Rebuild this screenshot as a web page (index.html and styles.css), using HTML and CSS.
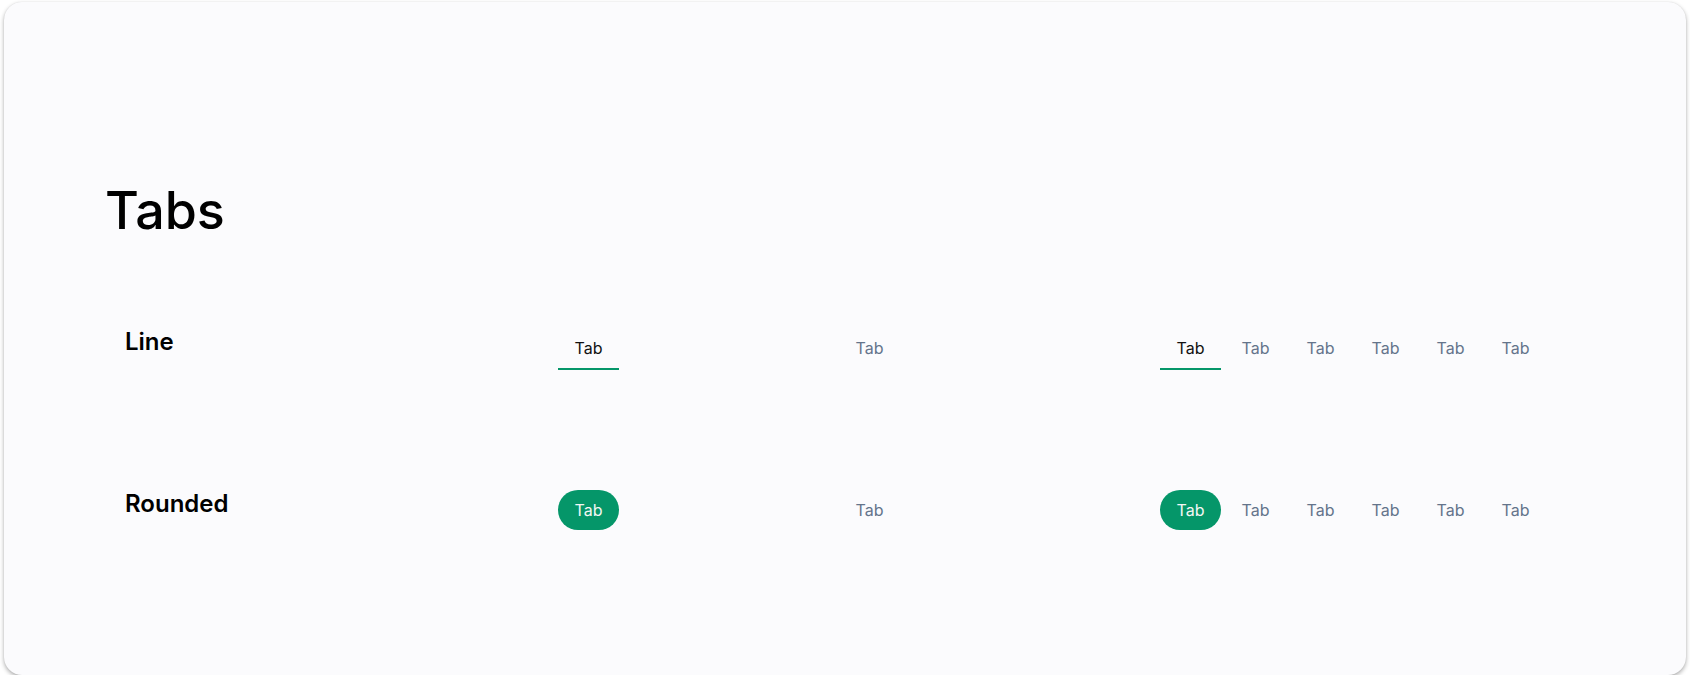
FILE: index.html
```html
<!DOCTYPE html>
<html lang="en">
<head>
<meta charset="utf-8">
<title>Tabs</title>
<link rel="stylesheet" href="styles.css">
</head>
<body>
<main class="card">
  <h1 class="title">Tabs</h1>
  <section class="rows">
    <div class="row">
      <h2 class="label">Line</h2>
      <div class="cell"><div class="tabs tabs-line"><button class="tab active">Tab</button></div></div>
      <div class="cell"><div class="tabs tabs-line"><button class="tab">Tab</button></div></div>
      <div class="cell">
        <div class="tabs tabs-line">
          <button class="tab active">Tab</button>
          <button class="tab">Tab</button>
          <button class="tab">Tab</button>
          <button class="tab">Tab</button>
          <button class="tab">Tab</button>
          <button class="tab">Tab</button>
        </div>
      </div>
    </div>
    <div class="row">
      <h2 class="label">Rounded</h2>
      <div class="cell"><div class="tabs tabs-rounded"><button class="tab active">Tab</button></div></div>
      <div class="cell"><div class="tabs tabs-rounded"><button class="tab">Tab</button></div></div>
      <div class="cell">
        <div class="tabs tabs-rounded">
          <button class="tab active">Tab</button>
          <button class="tab">Tab</button>
          <button class="tab">Tab</button>
          <button class="tab">Tab</button>
          <button class="tab">Tab</button>
          <button class="tab">Tab</button>
        </div>
      </div>
    </div>
  </section>
</main>
</body>
</html>
```

FILE: styles.css
```css
* { box-sizing: border-box; }

html, body {
  margin: 0;
  padding: 0;
  background: #ffffff;
}

body {
  font-family: Inter, "Noto Sans", sans-serif;
  color: #000;
}

.card {
  margin: 2px 4px 0;
  height: 673px;
  padding: 179px 100px 0 101px;
  background: #fbfbfd;
  border-radius: 18px;
  box-shadow: 0 2px 4px rgba(0, 0, 0, 0.32), 0 0 1px rgba(0, 0, 0, 0.12);
}

.title {
  margin: 0;
  font-size: 52px;
  font-weight: 500;
  line-height: 60px;
  letter-spacing: 0;
}

.rows {
  margin-top: 87px;
  padding-left: 20px;
  display: flex;
  flex-direction: column;
  gap: 120px;
}

.row {
  display: grid;
  grid-template-columns: 433px 281px 321px 1fr;
  align-items: start;
}

.label {
  margin: 0;
  font-size: 24px;
  font-weight: 600;
  line-height: 28px;
}

.tabs {
  display: flex;
  gap: 4px;
}

.tab {
  height: 40px;
  width: 61px;
  padding: 0;
  border: 0;
  background: transparent;
  font-family: inherit;
  font-size: 16px;
  line-height: 40px;
  color: #64748b;
  text-align: center;
}

.tabs-line .tab {
  height: 42px;
  border-bottom: 2px solid transparent;
}

.tabs-line .tab.active {
  color: #111111;
  border-bottom-color: #059669;
}

.tabs-rounded .tab {
  border-radius: 20px;
}

.tabs-rounded .tab.active {
  background: #059669;
  color: #f3f6f4;
}
```
